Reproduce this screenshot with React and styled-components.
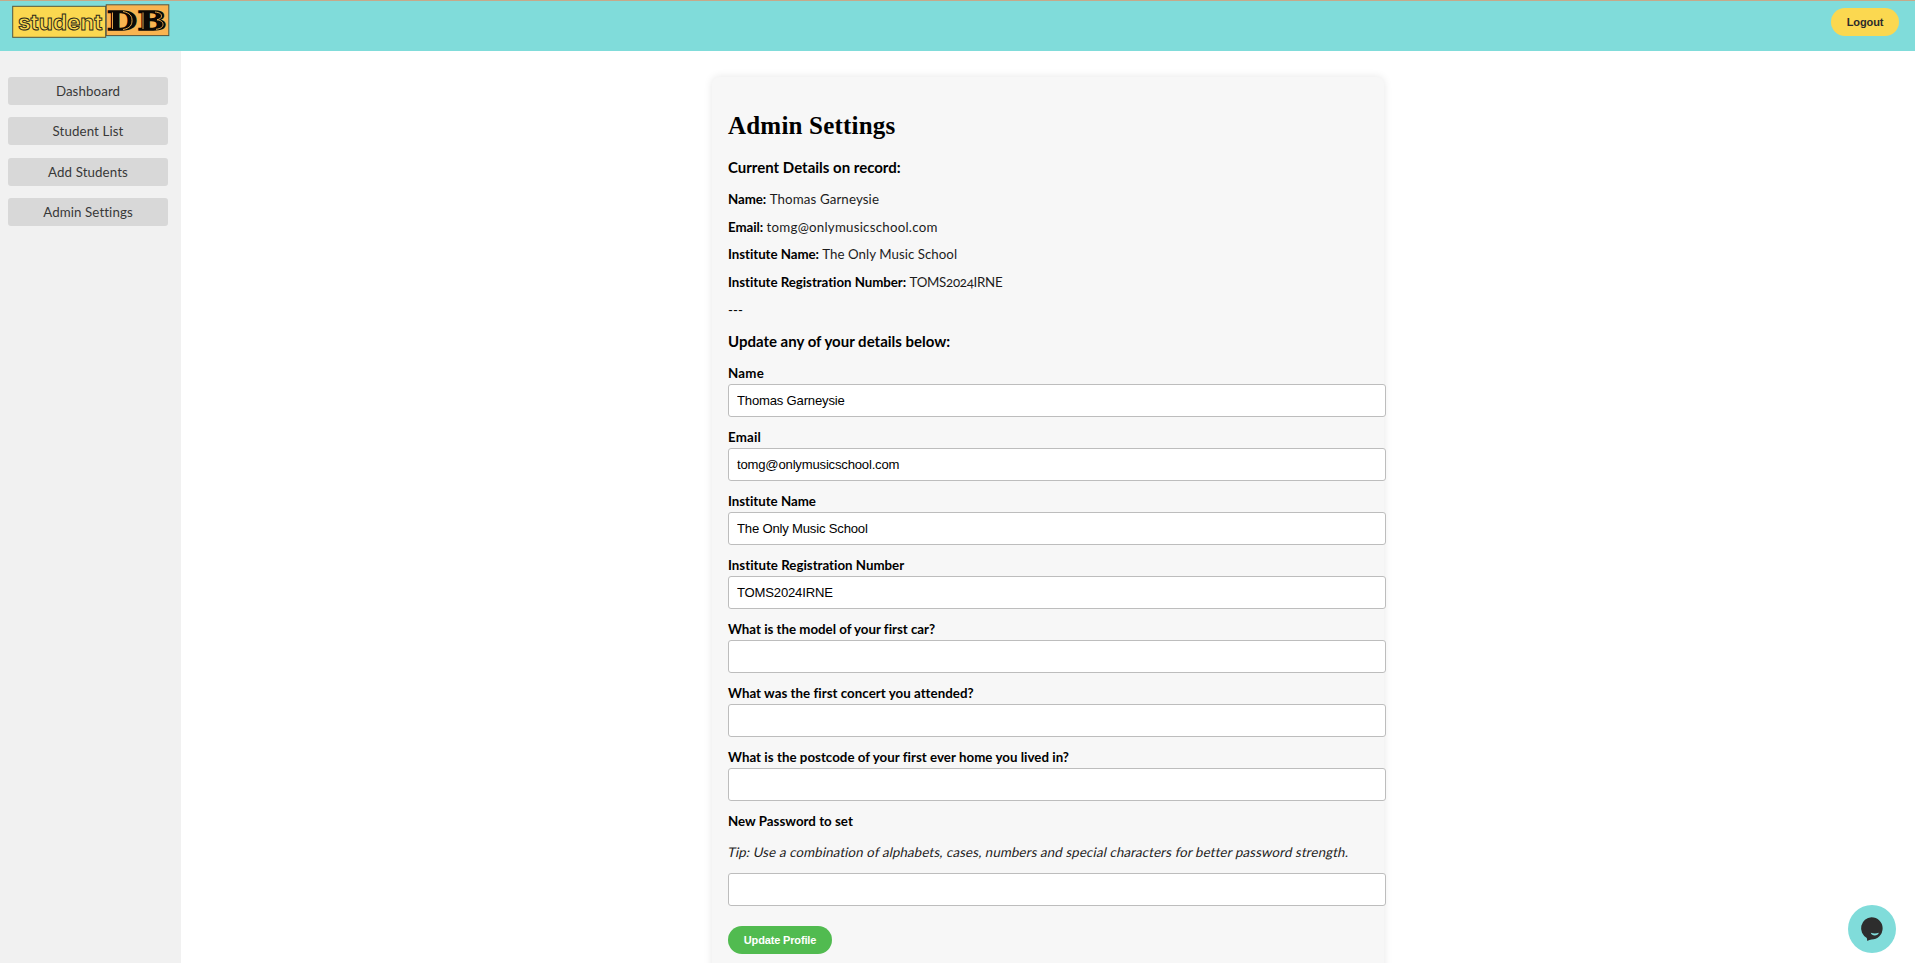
import React from 'react';
import styled, { createGlobalStyle } from 'styled-components';

const GlobalStyle = createGlobalStyle`
  * { box-sizing: border-box; }
  body {
    margin: 0;
    overflow: hidden;
    background: #fff;
    color: #000;
    font-family: Lato, "Open Sans", sans-serif;
    font-size: 13.3px;
    font-variant-ligatures: none;
  }
`;

const Page = styled.div`
  display: flex;
  flex-direction: column;
  height: 100vh;
  overflow: hidden;
`;

const Header = styled.header`
  display: flex;
  flex: none;
  justify-content: space-between;
  align-items: flex-start;
  height: 51px;
  padding: 3px 16px 0 11px;
  border-top: 1px solid #c6a98a;
  background: #80dcda;
`;

const Logo = styled.svg`
  display: block;
`;

const PillButton = styled.button`
  width: ${(p) => p.$width}px;
  height: 28px;
  padding: 0;
  border: 0;
  border-radius: 14px;
  background: ${(p) => p.$background};
  color: ${(p) => p.$color};
  font: bold 11px "Liberation Sans", Arial, sans-serif;
  letter-spacing: ${(p) => p.$track || 0}px;
`;

const LogoutButton = styled(PillButton)`
  margin-top: 4px;
`;

const Body = styled.div`
  display: flex;
  flex: 1;
  min-height: 0;
`;

const Sidebar = styled.nav`
  display: flex;
  flex: none;
  flex-direction: column;
  gap: 12.9px;
  width: 181px;
  padding: 26px 13px 0 8px;
  background: #f1f1f1;
`;

const NavItem = styled.a`
  height: 27.6px;
  border-radius: 3px;
  background: #d8d8d8;
  color: #383838;
  line-height: 28px;
  text-align: center;
  letter-spacing: 0.1px;
`;

const Main = styled.main`
  flex: 1;
  padding-top: 26px;
`;

const Card = styled.section`
  width: 672px;
  height: 960px;
  margin: 0 auto;
  padding: 34px 16px 0;
  border-radius: 7px;
  background: #f7f7f7;
  box-shadow: 0 0 9px rgba(0, 0, 0, 0.1);
`;

const Title = styled.h1`
  margin: 0 0 17px;
  font: bold 25px/30px "Liberation Serif", "Times New Roman", serif;
  letter-spacing: 0.2px;
`;

const Subtitle = styled.h2`
  margin: 0 0 14px;
  font-size: 15px;
  line-height: 18px;
  letter-spacing: 0;
`;

const Details = styled.div`
  display: flex;
  flex-direction: column;
  gap: 11.7px;
  margin-bottom: 15px;
`;

const Detail = styled.p`
  margin: 0;
  line-height: 16px;
  white-space: pre;
  transform: translateY(0.5px);
`;

const DetailLabel = styled.strong`
  letter-spacing: -0.05px;
`;

const DetailValue = styled.span`
  color: #1c1c1c;
  font-variant-numeric: oldstyle-nums;
  letter-spacing: ${(p) => p.$track}px;
`;

const Form = styled.form`
  display: flex;
  flex-direction: column;
  gap: 11px;
`;

const Field = styled.label`
  display: flex;
  flex-direction: column;
  height: ${(p) => (p.$tall ? 94 : 53)}px;
`;

const FieldName = styled.span`
  margin-bottom: 2px;
  font-weight: bold;
  line-height: 18px;
  letter-spacing: ${(p) => p.$track || 0}px;
`;

const Tip = styled.span`
  align-self: flex-start;
  margin: 12px 0 13px;
  color: #1c1c1c;
  line-height: 16px;
  white-space: nowrap;
  letter-spacing: ${(p) => p.$track}px;
  transform: skewX(-12deg);
`;

const Input = styled.input`
  flex: none;
  width: 658px;
  height: 33px;
  padding: 0 8px;
  border: 1px solid #bdbdbd;
  border-radius: 3px;
  background: #fff;
  color: #000;
  font: 13.1px "Liberation Sans", Arial, sans-serif;
  letter-spacing: -0.19px;
`;

const SubmitButton = styled(PillButton)`
  margin-top: 9px;
`;

const ChatButton = styled.button`
  position: absolute;
  right: 19px;
  bottom: 10px;
  width: 48px;
  height: 48px;
  padding: 0;
  border: 0;
  border-radius: 50%;
  background: #80dcda;
`;

const ChatIcon = styled.svg`
  display: block;
`;

const links = ['Dashboard', 'Student List', 'Add Students', 'Admin Settings'];

const details = [
  { label: 'Name:', value: 'Thomas Garneysie', track: 0.12 },
  { label: 'Email:', value: 'tomg@onlymusicschool.com', track: 0.23 },
  { label: 'Institute Name:', value: 'The Only Music School', track: 0.03 },
  { label: 'Institute Registration Number:', value: 'TOMS2024IRNE', track: -0.28 },
];

const fields = [
  { name: 'Name', value: 'Thomas Garneysie', track: 0.25 },
  { name: 'Email', value: 'tomg@onlymusicschool.com', track: 0.2 },
  { name: 'Institute Name', value: 'The Only Music School', track: -0.03 },
  { name: 'Institute Registration Number', value: 'TOMS2024IRNE', track: 0 },
  { name: 'What is the model of your first car?', value: '', track: -0.01 },
  { name: 'What was the first concert you attended?', value: '', track: 0.03 },
  { name: 'What is the postcode of your first ever home you lived in?', value: '', track: 0.03 },
];

function BrandLogo() {
  return (
    <Logo width="160" height="36" viewBox="11 4 160 36" role="img" aria-label="studentDB">
      <rect x="12.7" y="6.3" width="93" height="31" fill="#fbd850" stroke="#55553d" />
      <rect x="106.2" y="4.8" width="62.6" height="30.8" fill="#f9b450" stroke="#55553d" />
      <text x="18" y="30.3" textLength="84.500" lengthAdjust="spacingAndGlyphs" fontFamily="Inter, sans-serif" fontWeight="700" fontSize="21.500" fill="#fbd850" stroke="#2b2818" strokeWidth="0.9">student</text>
      <g fontFamily="'DejaVu Serif', serif" fontWeight="bold" fontSize="26.500" fill="#0b0905" stroke="#0b0905" strokeWidth="1.500">
        <text x="107" y="30.3" textLength="30" lengthAdjust="spacingAndGlyphs">D</text>
        <text x="137.500" y="30.3" textLength="29" lengthAdjust="spacingAndGlyphs">B</text>
      </g>
      <g fill="none" stroke="#f9b450" strokeWidth="0.9">
        <path d="M112.500 12.500v16.500M123 11.500c7 1.500 9 4.500 9 9s-2 7.800-9 9" />
        <path d="M143 12.500v16.500M155 12c5 .5 6.500 2 6.500 4s-1.500 3-4.500 3.800c4.500.7 6 2.500 6 4.700s-2 4.300-7 4.800" />
      </g>
    </Logo>
  );
}

export default function App() {
  return (
    <>
      <GlobalStyle />
      <Page>
        <Header>
          <BrandLogo />
          <LogoutButton $width={68} $background="#fbd850" $color="#2b2b2b" $track={-0.1}>Logout</LogoutButton>
        </Header>
        <Body>
          <Sidebar>
            {links.map((link) => <NavItem key={link}>{link}</NavItem>)}
          </Sidebar>
          <Main>
            <Card>
              <Title>Admin Settings</Title>
              <Subtitle>Current Details on record:</Subtitle>
              <Details>
                {details.map((d) => (
                  <Detail key={d.label}>
                    <DetailLabel>{d.label}</DetailLabel>{' '}
                    <DetailValue $track={d.track}>{d.value}</DetailValue>
                  </Detail>
                ))}
                <Detail>---</Detail>
              </Details>
              <Subtitle>Update any of your details below:</Subtitle>
              <Form>
                {fields.map((f) => (
                  <Field key={f.name}>
                    <FieldName $track={f.track}>{f.name}</FieldName>
                    <Input defaultValue={f.value} />
                  </Field>
                ))}
                <Field $tall>
                  <FieldName $track={0.02}>New Password to set</FieldName>
                  <Tip $track={0.13}>Tip: Use a combination of alphabets, cases, numbers and special characters for better password strength.</Tip>
                  <Input type="password" />
                </Field>
                <SubmitButton type="button" $width={104} $background="#51bb50" $color="#fff" $track={-0.15}>Update Profile</SubmitButton>
              </Form>
            </Card>
          </Main>
        </Body>
        <ChatButton aria-label="Chat">
          <ChatIcon width="48" height="48" viewBox="0 0 48 48">
            <path d="M23.500 12.200a11.100 11.100 0 0 1 0 22.300c-1.200.2-3 .8-4.200 1.500l-.5-3A11.100 11.100 0 0 1 23.500 12.200z" fill="#2d2d2d" />
            <path d="M22.800 27.800q4 1.400 8 0c-.7 3.700-7.300 3.700-8 0z" fill="#80dcda" />
          </ChatIcon>
        </ChatButton>
      </Page>
    </>
  );
}
